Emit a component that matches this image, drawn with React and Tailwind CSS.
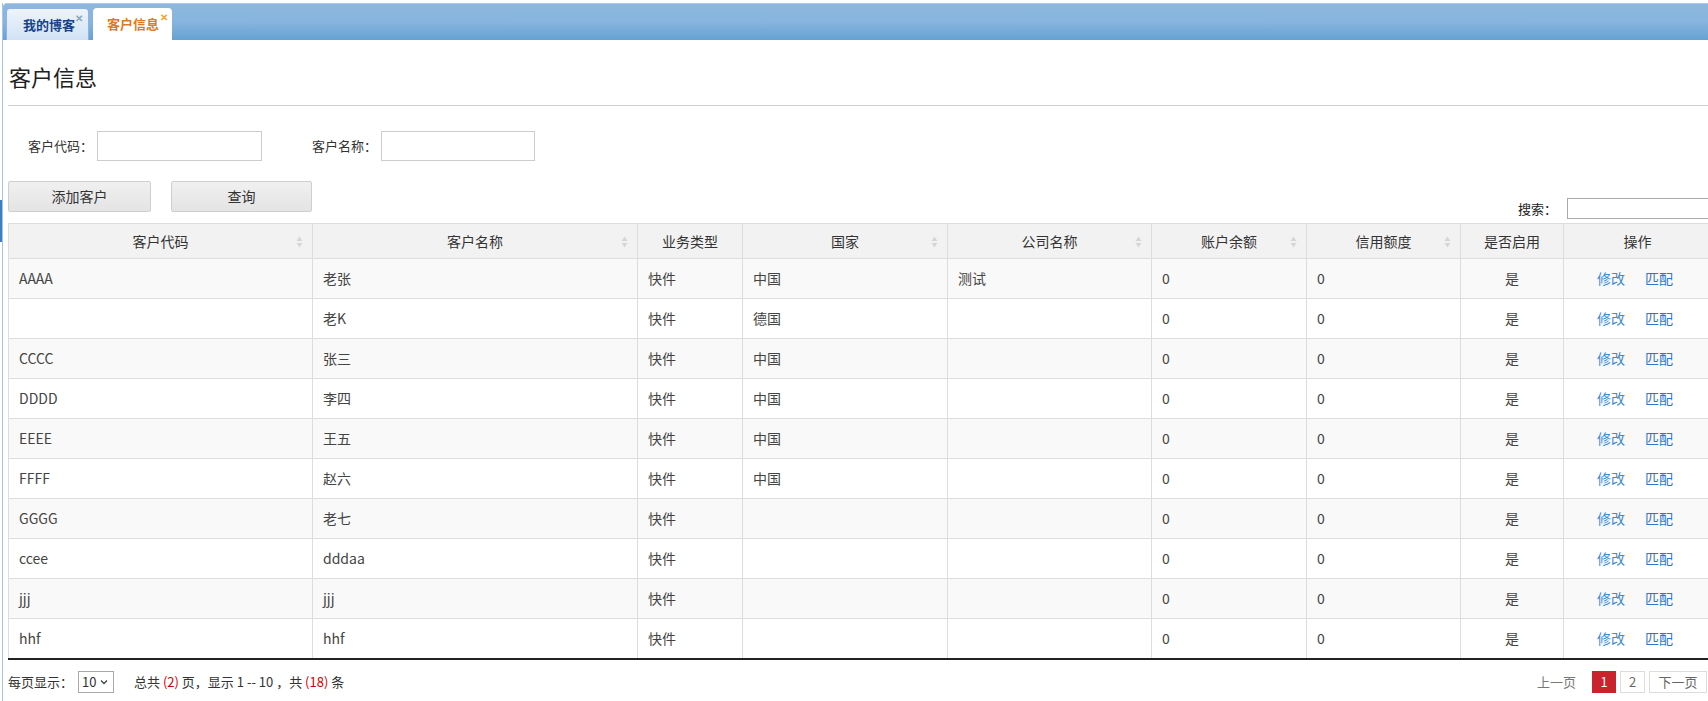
import React from 'react';

const cols = [
  { w: 'w-[304px]', label: '客户代码', sort: true },
  { w: 'w-[325px]', label: '客户名称', sort: true },
  { w: 'w-[105px]', label: '业务类型' },
  { w: 'w-[205px]', label: '国家', sort: true },
  { w: 'w-[204px]', label: '公司名称', sort: true },
  { w: 'w-[155px]', label: '账户余额', sort: true },
  { w: 'w-[154px]', label: '信用额度', sort: true },
  { w: 'w-[103px]', label: '是否启用' },
  { w: 'w-[148px]', label: '操作' },
];

const rows = [
  ['AAAA', '老张', '快件', '中国', '测试'],
  ['', '老K', '快件', '德国', ''],
  ['CCCC', '张三', '快件', '中国', ''],
  ['DDDD', '李四', '快件', '中国', ''],
  ['EEEE', '王五', '快件', '中国', ''],
  ['FFFF', '赵六', '快件', '中国', ''],
  ['GGGG', '老七', '快件', '', ''],
  ['ccee', 'dddaa', '快件', '', ''],
  ['jjj', 'jjj', '快件', '', ''],
  ['hhf', 'hhf', '快件', '', ''],
];

const SortIcon = () => (
  <svg width="7" height="12" viewBox="0 0 7 12" className="absolute right-[9px] top-[12px]">
    <path d="M3.5 0.5 L6.5 5 L0.5 5 Z" fill="#d6d6d6" />
    <path d="M3.5 11.5 L6.5 7 L0.5 7 Z" fill="#d6d6d6" />
  </svg>
);

const Tab = ({ label, active }) => (
  <div
    className={
      active
        ? 'relative h-[32px] w-[79px] ml-[4px] rounded-t-[4px] bg-white flex items-center pl-[14px] text-[13px] font-bold text-[#e07a1f]'
        : 'relative h-[32px] w-[83px] ml-[3px] rounded-t-[4px] border border-b-0 border-[#8db2e3] bg-linear-to-b from-[#eef4fb] to-[#d2e2f4] flex items-center pl-[16px] text-[13px] font-bold text-[#15428b]'
    }
  >
    {label}
    <span className={active ? 'absolute top-[4px] right-[4px] text-[10px] font-bold leading-none text-[#f3a51e]' : 'absolute top-[4px] right-[5px] text-[10px] font-bold leading-none text-[#8aa5c4]'}>
      ✕
    </span>
  </div>
);

export default function App() {
  return (
    <div className="relative w-[1708px] h-[701px] overflow-hidden bg-white font-['Noto_Sans_CJK_SC','Noto_Sans',sans-serif] text-[#333]">
      <div className="absolute left-0 top-[200px] h-[42px] w-[2px] bg-[#3b7fc4]" />
      <div className="ml-[2px] mt-[3px] w-[1730px] h-[698px] border-l border-[#a7c5e4]">
        {/* tab strip */}
        <div className="h-[37px] rounded-tl-[4px] border-t border-[#a9cbe9] bg-linear-to-b from-[#8fb7dd] via-[#86b5df] to-[#66a1d2] flex items-end pt-[4px]">
          <Tab label="我的博客" />
          <Tab label="客户信息" active />
        </div>

        <div className="pl-[5px]">
          <h1 className="pt-[21px] pl-[1px] text-[22px] leading-[30px] font-normal text-[#222]">客户信息</h1>
          <div className="mt-[14px] border-t border-[#cfcfcf]" />

          {/* filter form */}
          <div className="mt-[25px] flex items-center h-[30px] text-[13px] text-[#333]">
            <span className="ml-[20px] mr-[4px]">客户代码：</span>
            <div className="w-[165px] h-[30px] border border-[#ccc] bg-white" />
            <span className="ml-[50px] mr-[4px]">客户名称：</span>
            <div className="w-[154px] h-[30px] border border-[#ccc] bg-white" />
          </div>

          {/* buttons + search */}
          <div className="mt-[20px] h-[42px] flex justify-between items-start w-[1703px]">
            <div className="flex gap-[20px]">
              <button className="w-[143px] h-[31px] rounded-[2px] border border-[#cfcfcf] bg-linear-to-b from-[#f0f0f0] to-[#e4e4e4] text-[14px] text-[#333]">
                添加客户
              </button>
              <button className="w-[141px] h-[31px] rounded-[2px] border border-[#cfcfcf] bg-linear-to-b from-[#f0f0f0] to-[#e4e4e4] text-[14px] text-[#333]">
                查询
              </button>
            </div>
            <div className="mt-[17px] flex items-center mr-[-6px]">
              <span className="text-[13px] text-[#222] mr-[10px]">搜索：</span>
              <div className="w-[150px] h-[21px] border border-[#aaa] bg-white" />
            </div>
          </div>

          {/* table */}
          <table className="table-fixed border-collapse w-[1703px] text-[14px]">
            <colgroup>
              {cols.map((c, i) => (
                <col key={i} className={c.w} />
              ))}
            </colgroup>
            <thead>
              <tr>
                {cols.map((c, i) => (
                  <th key={i} className="relative h-[35px] border border-[#ddd] bg-[#f2f2f2] font-normal text-center text-[#333]">
                    {c.label}
                    {c.sort && <SortIcon />}
                  </th>
                ))}
              </tr>
            </thead>
            <tbody>
              {rows.map((r, i) => {
                const last = i === rows.length - 1;
                const cell = last
                  ? 'h-[40px] border border-[#ddd] border-b-2 border-b-[#222] pl-[10px] text-[#444]'
                  : 'h-[40px] border border-[#ddd] pl-[10px] text-[#444]';
                return (
                  <tr key={i} className={i % 2 === 0 ? 'bg-[#f9f9f9]' : 'bg-white'}>
                    <td className={cell}>{r[0]}</td>
                    <td className={cell}>{r[1]}</td>
                    <td className={cell}>{r[2]}</td>
                    <td className={cell}>{r[3]}</td>
                    <td className={cell}>{r[4]}</td>
                    <td className={cell}>0</td>
                    <td className={cell}>0</td>
                    <td className={cell + ' text-center !pl-0'}>是</td>
                    <td className={cell + ' !pl-[33px]'}>
                      <span className="text-[#3a8ad6] text-[14px]">修改</span>
                      <span className="ml-[20px] text-[#2f75c9] text-[14px]">匹配</span>
                    </td>
                  </tr>
                );
              })}
            </tbody>
          </table>

          {/* footer */}
          <div className="mt-[11px] w-[1703px] flex items-center justify-between text-[13px] text-[#333]">
            <div className="flex items-center">
              <span>每页显示：</span>
              <div className="ml-[5px] w-[36px] h-[22px] border border-[#a8a8a8] flex items-center pl-[3px] text-[13px]">
                10
                <svg width="8" height="6" viewBox="0 0 8 6" className="ml-[4px]">
                  <path d="M1 1.5 L4 4.5 L7 1.5" stroke="#444" strokeWidth="1.3" fill="none" />
                </svg>
              </div>
              <span className="ml-[20px]">
                总共 <span className="text-[#c00]">(2)</span> 页，显示 1 -- 10 ，共 <span className="text-[#c00]">(18)</span> 条
              </span>
            </div>
            <div className="flex items-center gap-[4px] mr-[4px] text-[13px]">
              <span className="px-[4px] text-[#777]">上一页</span>
              <span className="ml-[8px] w-[24px] h-[22px] bg-[#c9232b] text-white flex items-center justify-center">1</span>
              <span className="w-[25px] h-[22px] border border-[#ddd] text-[#666] flex items-center justify-center">2</span>
              <span className="w-[58px] h-[22px] border border-[#ddd] text-[#666] flex items-center justify-center">下一页</span>
            </div>
          </div>
        </div>
      </div>
    </div>
  );
}
